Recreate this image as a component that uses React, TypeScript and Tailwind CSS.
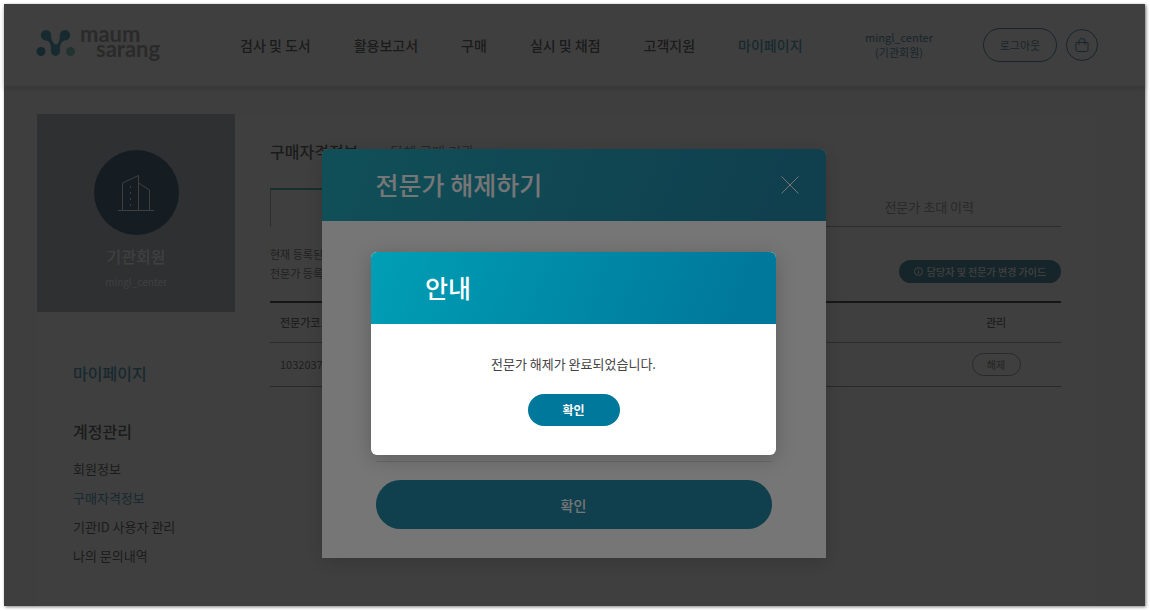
const navItems = [
  { label: '검사 및 도서' },
  { label: '활용보고서' },
  { label: '구매' },
  { label: '실시 및 채점' },
  { label: '고객지원' },
  { label: '마이페이지', active: true },
];

const sideItems = [
  { label: '회원정보' },
  { label: '구매자격정보', active: true },
  { label: '기관ID 사용자 관리' },
  { label: '나의 문의내역' },
];

function Logo() {
  return (
    <a href="#" aria-label="maum sarang" className="flex w-[204px] shrink-0 items-center pb-1">
      <svg width="40" height="28" viewBox="0 0 40 28">
        <path
          d="M10 1 a5.2 5.2 0 0 1 5.200 5.200 c0 5 2 8.500 4.800 9.300 c2.800 -0.800 3.800 -4.300 3.800 -9.300 a5.200 5.200 0 1 1 5.200 5.200 c-3 0 -5 4 -5 8 v3 a4.500 4.500 0 0 1 -9 0 v-3 c0 -4 -2 -8 -5 -8 a5.200 5.200 0 0 1 0 -10.400 z"
          fill="#007f9c"
        />
        <circle cx="5" cy="22.500" r="4.500" fill="#00708f" />
        <circle cx="34.500" cy="22.500" r="4.500" fill="#4fae9c" />
      </svg>
      <span className="ml-1 flex flex-col pb-1 font-['Lato','Noto_Sans_CJK_KR',sans-serif] text-[22px] leading-[15px] font-bold text-[#808080]">
        <span>maum</span>
        <span className="pl-4">sarang</span>
      </span>
    </a>
  );
}

function Header() {
  return (
    <header className="relative flex h-[82px] items-center bg-white pr-[47px] pl-8 shadow-[0_3px_5px_rgba(0,0,0,0.16)]">
      <Logo />
      <nav className="flex flex-1 items-center gap-[43px] text-sm font-medium whitespace-nowrap text-[#222]">
        {navItems.map((item) => (
          <a key={item.label} href="#" className={item.active ? 'text-[#00789c]' : ''}>
            {item.label}
          </a>
        ))}
      </nav>
      <p className="mr-[50px] text-center text-[11px] leading-[15px] text-[#00607d]">
        mingl_center
        <br />
        (기관회원)
      </p>
      <button className="h-[34px] w-[74px] rounded-full border border-[#00607d] text-[11px] text-[#00607d]">로그아웃</button>
      <button
        aria-label="장바구니"
        className="ml-[9px] flex size-8 items-center justify-center rounded-full border border-[#00607d] text-[#00607d]"
      >
        <svg width="14" height="16" viewBox="0 0 14 16" fill="none" stroke="currentColor">
          <path d="M1 5.500 H13 V13 a1.500 1.500 0 0 1 -1.500 1.500 H2.500 a1.500 1.500 0 0 1 -1.500 -1.500 Z" />
          <path d="M4 8 V4.500 a3 3 0 0 1 6 0 V8" />
        </svg>
      </button>
    </header>
  );
}

function Sidebar() {
  return (
    <aside className="w-[198px] shrink-0">
      <div className="flex h-[198px] flex-col items-center bg-[#93a1ad] pt-9 text-white">
        <div className="flex size-[85px] items-center justify-center rounded-full bg-[#002b4b]">
          <svg width="38" height="38" viewBox="0 0 38 38" fill="none" stroke="currentColor">
            <path d="M1 36.500 H37 M5.500 36.500 V9 L21.500 1.500 V36.500 M21.500 9 L32.500 16 V36.500" />
            <path d="M13.500 12 V33" strokeDasharray="2 4" />
          </svg>
        </div>
        <p className="mt-[9px] text-base leading-6 font-medium">기관회원</p>
        <p className="mt-1.5 text-[10px] leading-4">mingl_center</p>
      </div>
      <div className="flex flex-col pt-[49px] pl-9">
        <a href="#" className="text-base leading-6 font-medium text-[#00789c]">마이페이지</a>
        <h2 className="mt-[34px] text-base leading-6 font-medium text-[#222]">계정관리</h2>
        <ul className="mt-[11px] text-[13px] leading-[29px] text-[#222]">
          {sideItems.map((item) => (
            <li key={item.label}>
              <a href="#" className={item.active ? 'text-[#00789c]' : ''}>{item.label}</a>
            </li>
          ))}
        </ul>
      </div>
    </aside>
  );
}

function Content() {
  return (
    <main className="flex-1 bg-white pt-[25px] pr-9 pl-[35px]">
      <div className="flex items-center gap-8 leading-6">
        <h1 className="text-base font-medium text-[#222]">구매자격정보</h1>
        <a href="#" className="text-sm text-[#666]">단체 구매 기관</a>
      </div>

      <div className="mt-[25px] grid h-[39px] grid-cols-3 text-[13px]">
        <button aria-label="전문가 관리" className="border-t-2 border-l border-t-[#00a088] border-l-[#999]" />
        <button aria-label="전문가 초대" className="border-b border-[#888]" />
        <button className="border-b border-[#888] text-[#777]">전문가 초대 이력</button>
      </div>

      <div className="mt-[17px] flex items-center justify-between">
        <p className="text-[11px] leading-[19px] text-[#444]">
          현재 등록된
          <br />
          전문가 등록
        </p>
        <button className="mt-4 flex h-[23px] w-[162px] items-center justify-center gap-1 rounded-full bg-[#00607d] text-[10px] font-medium text-white">
          <svg width="9" height="9" viewBox="0 0 9 9" fill="none" stroke="currentColor">
            <circle cx="4.500" cy="4.500" r="4" />
            <path d="M4.500 4 V7 M4.500 2 V3" />
          </svg>
          담당자 및 전문가 변경 가이드
        </button>
      </div>

      <table className="mt-[18px] w-full border-t-2 border-b border-t-black border-b-[#777] text-[11px] text-[#333]">
        <thead>
          <tr className="h-10 border-b border-[#888]">
            <th className="pl-2.5 text-left font-medium">전문가코드</th>
            <th className="w-[130px] font-medium">관리</th>
          </tr>
        </thead>
        <tbody>
          <tr className="h-11">
            <td className="pl-2.5">10320373</td>
            <td className="text-center">
              <button className="h-[23px] w-[49px] rounded-full border border-[#777] text-[10px] text-[#555]">해제</button>
            </td>
          </tr>
        </tbody>
      </table>
    </main>
  );
}

function ExpertDialog() {
  return (
    <div className="absolute inset-0 flex items-start justify-center bg-[#1b1b1b]/60 pt-[145px] pr-0.5">
      <section role="dialog" aria-labelledby="expert-title" className="w-[504px] overflow-hidden rounded-t-md bg-white shadow-[0_4px_20px_rgba(0,0,0,0.2)]">
        <header className="flex h-[72px] items-center justify-between bg-linear-110 from-[#009fb5] to-[#00789c] to-90% pr-[27px] pl-[54px] text-white">
          <h2 id="expert-title" className="text-[25px] font-medium">전문가 해제하기</h2>
          <button aria-label="닫기">
            <svg width="18" height="18" viewBox="0 0 18 18" fill="none" stroke="currentColor">
              <path d="M0.500 0.500 L17.500 17.500 M17.500 0.500 L0.500 17.500" />
            </svg>
          </button>
        </header>
        <div className="px-[54px] pb-[29px]">
          <div className="h-[241px] border-b border-[#ddd]" />
          <button className="mt-[18px] h-[49px] w-full rounded-full bg-[#00789c] text-sm font-medium text-white">확인</button>
        </div>
      </section>
    </div>
  );
}

function NoticeDialog() {
  return (
    <div className="absolute inset-0 flex items-start justify-center bg-[#1b1b1b]/60 pt-[248px] pr-0.5">
      <section role="alertdialog" aria-labelledby="notice-title" className="w-[405px] overflow-hidden rounded-md bg-white shadow-[0_4px_20px_rgba(0,0,0,0.2)]">
        <h2
          id="notice-title"
          className="flex h-[72px] items-center bg-linear-110 from-[#009fb5] to-[#00789c] to-90% pl-[54px] text-[25px] font-medium text-white"
        >
          안내
        </h2>
        <div className="flex flex-col items-center pt-[30px] pb-[29px]">
          <p className="text-[13px] leading-5 text-[#444]">전문가 해제가 완료되었습니다.</p>
          <button className="mt-5 h-8 w-[92px] rounded-full bg-[#00789c] text-xs font-bold text-white">확인</button>
        </div>
      </section>
    </div>
  );
}

export default function App() {
  return (
    <div className="flex min-h-screen bg-white pt-1 pr-[5px] pb-[5px] pl-1 font-['Noto_Sans_CJK_KR',sans-serif]">
      <div className="relative flex flex-1 flex-col shadow-[1px_1px_3px_rgba(0,0,0,0.5)]">
        <Header />
        <div className="flex flex-1 bg-[#f8f8f8] pt-7 pr-12 pl-[33px]">
          <div className="flex flex-1 bg-white">
            <Sidebar />
            <Content />
          </div>
        </div>
        <ExpertDialog />
        <NoticeDialog />
      </div>
    </div>
  );
}
